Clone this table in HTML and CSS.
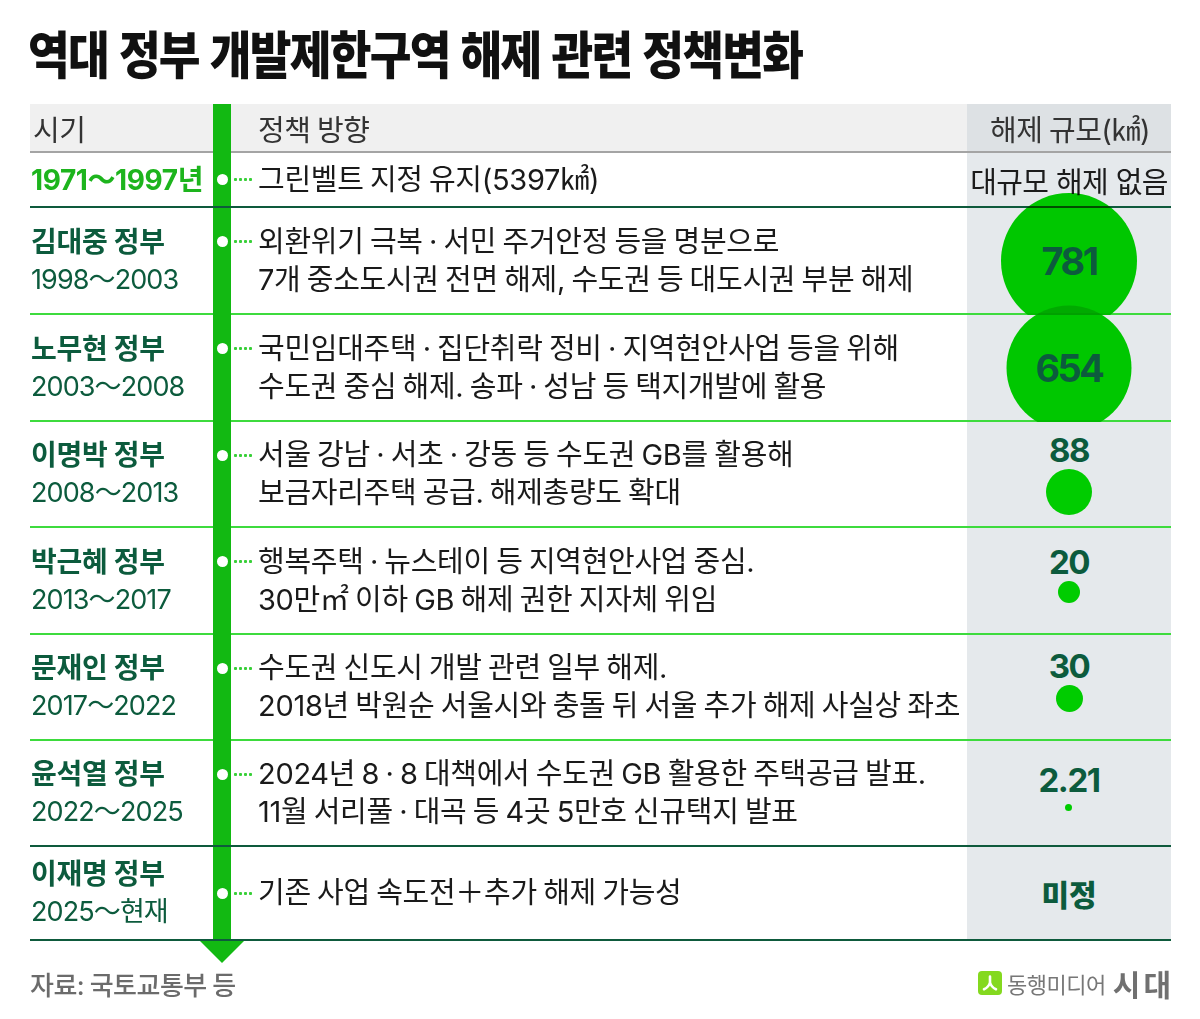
FILE: index.html
```html
<!DOCTYPE html>
<html lang="ko">
<head>
<meta charset="utf-8">
<title>역대 정부 개발제한구역 해제 관련 정책변화</title>
<link rel="stylesheet" href="styles.css">
</head>
<body>
<div class="page">
  <h1 class="title">역대 정부 개발제한구역 해제 관련 정책변화</h1>

  <div class="table">
    <div class="row head">
      <div class="cell c1"><span class="htext">시기</span></div>
      <div class="cell bar"></div>
      <div class="cell c3"><span class="htext hpol">정책 방향</span></div>
      <div class="cell c4"><span class="htext">해제 규모(㎢)</span></div>
    </div>

    <div class="row dark">
      <div class="cell c1"><div class="early">1971～1997년</div></div>
      <div class="cell bar"></div>
      <div class="cell c3"><div class="desc"><span class="leader"></span><div class="text"><div>그린벨트 지정 유지(5397㎢)</div></div></div></div>
      <div class="cell c4"><span class="none">대규모 해제 없음</span></div>
    </div>

    <div class="row light">
      <div class="cell c1"><div class="who"><div class="name">김대중 정부</div><div>1998～2003</div></div></div>
      <div class="cell bar"></div>
      <div class="cell c3"><div class="desc"><span class="leader"></span><div class="text"><div>외환위기 극복 · 서민 주거안정 등을 명분으로</div><div>7개 중소도시권 전면 해제, 수도권 등 대도시권 부분 해제</div></div></div></div>
      <div class="cell c4"><span class="big" style="width:136px;height:136px"></span><span class="bignum">781</span></div>
    </div>

    <div class="row light">
      <div class="cell c1"><div class="who"><div class="name">노무현 정부</div><div>2003～2008</div></div></div>
      <div class="cell bar"></div>
      <div class="cell c3"><div class="desc"><span class="leader"></span><div class="text"><div>국민임대주택 · 집단취락 정비 · 지역현안사업 등을 위해</div><div>수도권 중심 해제. 송파 · 성남 등 택지개발에 활용</div></div></div></div>
      <div class="cell c4"><span class="big" style="width:125px;height:125px"></span><span class="bignum">654</span></div>
    </div>

    <div class="row light">
      <div class="cell c1"><div class="who"><div class="name">이명박 정부</div><div>2008～2013</div></div></div>
      <div class="cell bar"></div>
      <div class="cell c3"><div class="desc"><span class="leader"></span><div class="text"><div>서울 강남 · 서초 · 강동 등 수도권 GB를 활용해</div><div>보금자리주택 공급. 해제총량도 확대</div></div></div></div>
      <div class="cell c4"><div class="val"><span class="num">88</span><span class="dot" style="width:46px;height:46px"></span></div></div>
    </div>

    <div class="row light">
      <div class="cell c1"><div class="who"><div class="name">박근혜 정부</div><div>2013～2017</div></div></div>
      <div class="cell bar"></div>
      <div class="cell c3"><div class="desc"><span class="leader"></span><div class="text"><div>행복주택 · 뉴스테이 등 지역현안사업 중심.</div><div>30만㎡ 이하 GB 해제 권한 지자체 위임</div></div></div></div>
      <div class="cell c4"><div class="val lift"><span class="num">20</span><span class="dot" style="width:22px;height:22px"></span></div></div>
    </div>

    <div class="row light">
      <div class="cell c1"><div class="who"><div class="name">문재인 정부</div><div>2017～2022</div></div></div>
      <div class="cell bar"></div>
      <div class="cell c3"><div class="desc"><span class="leader"></span><div class="text"><div>수도권 신도시 개발 관련 일부 해제.</div><div>2018년 박원순 서울시와 충돌 뒤 서울 추가 해제 사실상 좌초</div></div></div></div>
      <div class="cell c4"><div class="val lift"><span class="num">30</span><span class="dot" style="width:27px;height:27px"></span></div></div>
    </div>

    <div class="row dark">
      <div class="cell c1"><div class="who"><div class="name">윤석열 정부</div><div>2022～2025</div></div></div>
      <div class="cell bar"></div>
      <div class="cell c3"><div class="desc"><span class="leader"></span><div class="text"><div>2024년 8 · 8 대책에서 수도권 GB 활용한 주택공급 발표.</div><div>11월 서리풀 · 대곡 등 4곳 5만호 신규택지 발표</div></div></div></div>
      <div class="cell c4"><div class="val lift"><span class="num">2.21</span><span class="dot tiny" style="width:7px;height:7px"></span></div></div>
    </div>

    <div class="row dark">
      <div class="cell c1"><div class="who"><div class="name">이재명 정부</div><div>2025～현재</div></div></div>
      <div class="cell bar"></div>
      <div class="cell c3"><div class="desc"><span class="leader"></span><div class="text"><div>기존 사업 속도전＋추가 해제 가능성</div></div></div></div>
      <div class="cell c4"><span class="tbd">미정</span></div>
    </div>
  </div>

  <div class="arrow"></div>

  <div class="foot">
    <span class="source">자료: 국토교통부 등</span>
    <div class="logo">
      <span class="mark"><svg width="24" height="24" viewBox="0 0 24 24"><path d="M12 5.5 V11.5 M12 11.5 C11 15 8.5 17.2 6 18.3 M12 11.5 C13 15 15.5 17.2 18 18.3" fill="none" stroke="#fff" stroke-width="2.6" stroke-linecap="round"/></svg></span>
      <span class="brand">동행미디어</span>
      <span class="brand2">시대</span>
    </div>
  </div>
</div>
</body>
</html>
```

FILE: styles.css
```css
* {
  box-sizing: border-box;
  margin: 0;
  padding: 0;
}

body {
  background: #ffffff;
  font-family: "Inter", "Noto Sans CJK KR", sans-serif;
  color: #1c1c1c;
}

.page {
  width: 1200px;
  height: 1019px;
  padding: 22px 29px 0 30px;
  overflow: hidden;
}

.title {
  font-family: "Noto Sans CJK KR", sans-serif;
  font-weight: 900;
  font-size: 51px;
  letter-spacing: -2px;
  line-height: 60px;
  height: 60px;
  color: #111111;
  white-space: nowrap;
  transform: scaleX(0.89);
  transform-origin: left center;
  margin-left: -2px;
  margin-bottom: 22px;
}

.table {
  display: grid;
  width: 1141px;
  grid-template-rows: 49px 55px 107px 107px 106px 107px 106px 106px 94px;
}

.row {
  display: grid;
  grid-template-columns: 183px 18px 736px 204px;
  border-bottom: 2px solid #0e5a3c;
}

.row.light {
  border-bottom-color: #3ddb3d;
}

.row.head {
  border-bottom-color: #a4a4a4;
}

.cell {
  display: flex;
  align-items: center;
  min-width: 0;
}

.bar {
  background: #12b912;
}

.row.light .bar,
.row.head .bar {
  margin-bottom: -2px;
}

.head .c1,
.head .c3 {
  background: #f0f0f0;
}

.c1 {
  padding-left: 1px;
}

.c3 {
  padding-left: 2px;
}

.c4 {
  background: #e5e9ec;
  justify-content: center;
  position: relative;
}

.head .c4 {
  background: #dde1e4;
}

.htext {
  font-size: 29px;
  letter-spacing: -0.5px;
  word-spacing: -1px;
  color: #333333;
  padding-left: 2px;
  white-space: nowrap;
}

.hpol {
  padding-left: 25px;
}

.early {
  color: #1db41d;
  font-weight: 700;
  font-size: 28px;
  letter-spacing: -0.4px;
  line-height: 38px;
  white-space: nowrap;
}

.who {
  color: #0c5b3d;
  font-size: 27px;
  line-height: 38px;
  letter-spacing: -0.9px;
  white-space: nowrap;
}

.name {
  font-weight: 700;
  font-size: 28px;
  letter-spacing: -0.3px;
}

.desc {
  display: flex;
  align-items: flex-start;
}

.leader {
  flex: none;
  width: 20px;
  height: 38px;
  margin-right: 5px;
  position: relative;
  background: radial-gradient(circle, #38d038 1.3px, transparent 1.8px) 0 50% / 5px 5px repeat-x;
}

.leader::before {
  content: "";
  position: absolute;
  left: -16px;
  top: 13.5px;
  width: 11px;
  height: 11px;
  border-radius: 50%;
  background: #ffffff;
}

.text {
  font-size: 29px;
  line-height: 38px;
  letter-spacing: -0.3px;
  word-spacing: -1.5px;
  white-space: nowrap;
  color: #1a1a1a;
}

.none {
  font-size: 29px;
  letter-spacing: -0.6px;
  white-space: nowrap;
}

.big {
  position: absolute;
  left: 50%;
  top: 50%;
  transform: translate(-50%, -50%);
  border-radius: 50%;
  background: #00da00;
  mix-blend-mode: multiply;
}

.bignum {
  position: relative;
  z-index: 2;
  font-weight: 700;
  font-size: 38px;
  letter-spacing: -2.5px;
  color: #0c5b3d;
}

.val {
  display: flex;
  flex-direction: column;
  align-items: center;
}

.val.lift {
  padding-bottom: 12px;
}

.num {
  font-weight: 700;
  font-size: 33px;
  line-height: 33px;
  letter-spacing: -1.5px;
  color: #0c5b3d;
}

.dot {
  display: block;
  border-radius: 50%;
  background: #00cc00;
  margin-top: 2px;
}

.dot.tiny {
  margin-top: 7px;
}

.tbd {
  font-family: "Noto Sans CJK KR", sans-serif;
  font-weight: 900;
  font-size: 30px;
  color: #0c5b3d;
}

.arrow {
  width: 0;
  height: 0;
  border-left: 22px solid transparent;
  border-right: 22px solid transparent;
  border-top: 22px solid #12b912;
  margin-left: 170px;
}

.foot {
  width: 1141px;
  height: 30px;
  margin-top: 5px;
  display: flex;
  justify-content: space-between;
  align-items: center;
}

.source {
  font-size: 26px;
  font-weight: 500;
  color: #6b6b6b;
  letter-spacing: -0.5px;
  word-spacing: -1px;
}

.logo {
  display: flex;
  align-items: center;
}

.mark {
  display: block;
  width: 24px;
  height: 24px;
  border-radius: 4px;
  background: #84d91f;
}

.mark svg {
  display: block;
}

.brand {
  margin-left: 5px;
  font-size: 22px;
  color: #777777;
  letter-spacing: -0.5px;
}

.brand2 {
  margin-left: 7px;
  font-size: 30px;
  font-weight: 700;
  color: #707070;
  letter-spacing: 3px;
  margin-right: -3px;
}
```
